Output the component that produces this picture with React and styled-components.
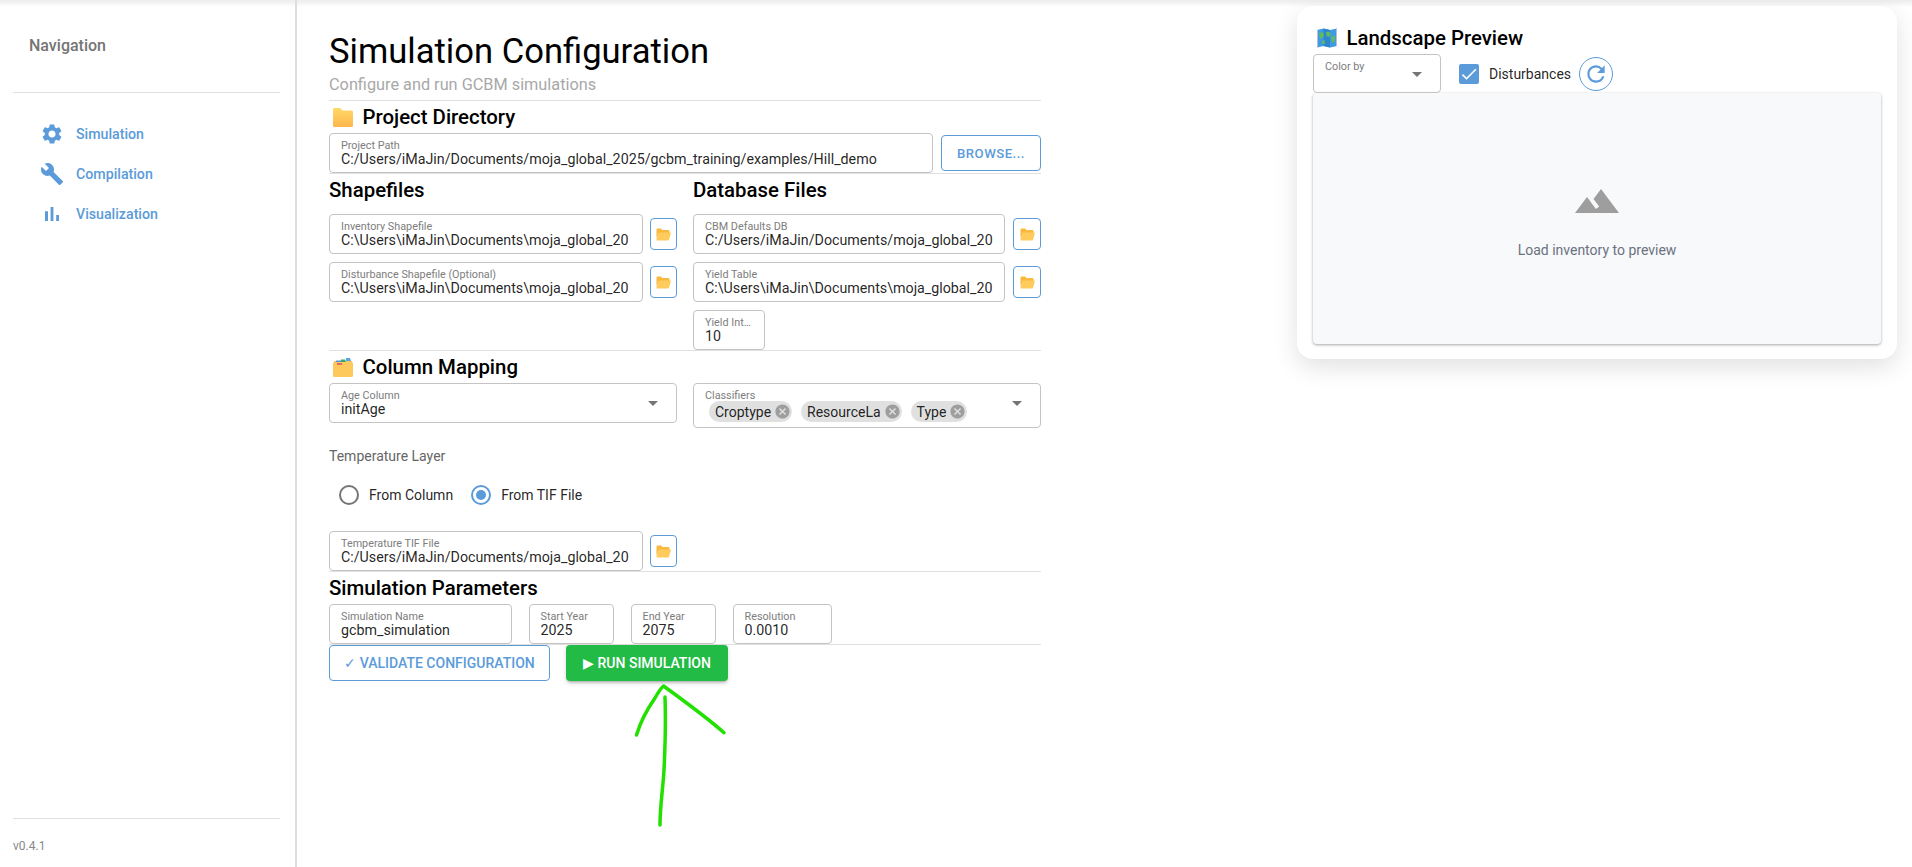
import React from "react";
import styled, { createGlobalStyle } from "styled-components";
import {
  MdSettings,
  MdBuild,
  MdArrowDropDown,
  MdCancel,
  MdCheck,
  MdRefresh,
  MdTerrain,
} from "react-icons/md";

const BLUE = "#5b9bd9";

const GlobalStyle = createGlobalStyle`
  html, body {
    margin: 0;
    padding: 0;
    background: #fff;
    font-family: Roboto, "Liberation Sans", sans-serif;
    color: rgba(0, 0, 0, 0.87);
  }
  * { box-sizing: border-box; }
`;

const Page = styled.div`
  position: relative;
  display: flex;
  height: 867px;
  overflow: hidden;
  &::before {
    content: "";
    position: absolute;
    top: 0;
    left: 0;
    right: 0;
    height: 7px;
    background: linear-gradient(#ececec, #ffffff);
  }
`;

const Sidebar = styled.aside`
  position: relative;
  width: 297px;
  flex: none;
  display: flex;
  flex-direction: column;
  border-right: 2px solid #dedede;
`;

const NavTitle = styled.div`
  height: 92px;
  padding: 36px 0 0 29px;
  font-size: 16px;
  line-height: 20px;
  font-weight: 500;
  color: #757575;
`;

const SideRule = styled.hr`
  margin: 0 15px 0 13px;
  border: 0;
  border-top: 1px solid #e0e0e0;
`;

const NavList = styled.nav`
  padding-top: 21px;
`;

const NavItem = styled.a`
  display: flex;
  align-items: center;
  gap: 12px;
  height: 40px;
  padding-left: 40px;
  font-size: 14.2px;
  font-weight: 500;
  color: ${BLUE};
  svg {
    width: 24px;
    height: 24px;
    flex: none;
  }
`;

const SideFooter = styled.div`
  margin-top: auto;
`;

const Version = styled.div`
  height: 48px;
  padding: 18px 0 0 13px;
  font-size: 12px;
  line-height: 18px;
  color: #888;
`;

const Main = styled.main`
  width: 744px;
  flex: none;
  padding: 30px 0 0 32px;
`;

const Title = styled.h1`
  margin: 0;
  height: 43px;
  font-size: 34.6px;
  line-height: 43px;
  font-weight: 400;
  color: #000;
`;

const Subtitle = styled.p`
  margin: 0 0 3px;
  height: 24px;
  font-size: 16.3px;
  line-height: 24px;
  color: #a8a8a8;
`;

const Rule = styled.hr`
  margin: 0;
  border: 0;
  border-top: 1px solid #e0e0e0;
`;

const Heading = styled.h2`
  margin: 0;
  display: flex;
  align-items: center;
  gap: 9.5px;
  height: 32px;
  margin-bottom: ${(p) => p.$mb || 0}px;
  padding-left: ${(p) => (p.$emoji ? 4 : 0)}px;
  font-size: 20.4px;
  line-height: 24px;
  font-weight: 500;
  color: #000;
`;

const Row = styled.div`
  display: flex;
  align-items: center;
  gap: ${(p) => p.$gap || 8}px;
`;

const Columns = styled.div`
  display: grid;
  grid-template-columns: 1fr 1fr;
  gap: 16px;
  align-items: start;
`;

const Stack = styled.div`
  display: flex;
  flex-direction: column;
  gap: 8px;
`;

const Field = styled.label`
  display: block;
  height: 40px;
  padding: 5px ${(p) => (p.$tight ? 13 : 11)}px 0 11px;
  border: 1px solid #c4c4c4;
  border-radius: 4px;
  background: #fff;
  min-width: 0;
  flex: ${(p) => (p.$w ? "none" : "1")};
  width: ${(p) => (p.$w ? `${p.$w}px` : "auto")};
`;

const FieldLabel = styled.span`
  display: block;
  font-size: 10.8px;
  line-height: 13px;
  color: #7d7d7d;
  white-space: nowrap;
`;

const FieldInput = styled.input`
  display: block;
  width: 100%;
  height: 15px;
  padding: 0;
  border: 0;
  outline: 0;
  background: transparent;
  font-family: inherit;
  font-size: 14.25px;
  line-height: 15px;
  color: rgba(0, 0, 0, 0.87);
`;

const Browse = styled.button`
  width: 100px;
  height: 36px;
  flex: none;
  padding: 0;
  border: 1px solid ${BLUE};
  border-radius: 4px;
  background: #fff;
  font-family: inherit;
  font-size: 13.2px;
  font-weight: 500;
  letter-spacing: 0.45px;
  color: ${BLUE};
`;

const FolderButton = styled.button`
  display: flex;
  align-items: center;
  justify-content: center;
  width: ${(p) => (p.$tight ? 27 : 28)}px;
  height: 32px;
  flex: none;
  padding: 0;
  border: 1px solid ${BLUE};
  border-radius: 4px;
  background: #fff;
`;

const SelectBox = styled.div`
  position: relative;
  height: ${(p) => p.$h || 40}px;
  padding: 5px 11px 0;
  border: 1px solid #c4c4c4;
  border-radius: 4px;
  flex: ${(p) => (p.$w ? "none" : "auto")};
  width: ${(p) => (p.$w ? `${p.$w}px` : "auto")};
`;

const SelectValue = styled.div`
  font-size: 14.25px;
  line-height: 15px;
`;

const Caret = styled(MdArrowDropDown)`
  position: absolute;
  top: 7px;
  right: 11px;
  font-size: 24px;
  color: #757575;
`;

const Chips = styled.div`
  display: flex;
  gap: 9px;
  margin-top: -1px;
  margin-left: 4px;
`;

const Chip = styled.span`
  display: inline-flex;
  align-items: center;
  gap: 3px;
  height: 21px;
  padding: 0 1px 0 6px;
  border-radius: 11px;
  background: #e0e0e0;
  font-size: 14px;
  color: rgba(0, 0, 0, 0.87);
  svg {
    font-size: 17px;
    color: #9e9e9e;
  }
`;

const GroupLabel = styled.div`
  margin-top: 18px;
  font-size: 14px;
  line-height: 20px;
  color: #666;
`;

const RadioRow = styled.div`
  display: flex;
  align-items: center;
  height: 42px;
  margin: 8px 0 15px;
  padding-left: 10px;
`;

const RadioOption = styled.div`
  display: flex;
  align-items: center;
  gap: 10px;
  margin-right: 18px;
  font-size: 14px;
`;

const RadioMark = styled.span`
  display: flex;
  align-items: center;
  justify-content: center;
  width: 20px;
  height: 20px;
  border: 2px solid ${(p) => (p.$on ? BLUE : "#757575")};
  border-radius: 50%;
  &::after {
    content: "";
    width: 10px;
    height: 10px;
    border-radius: 50%;
    background: ${(p) => (p.$on ? BLUE : "transparent")};
  }
`;

const ButtonRow = styled.div`
  display: flex;
  gap: 16px;
`;

const OutlineButton = styled.button`
  width: 221px;
  height: 36px;
  padding: 0;
  border: 1px solid ${BLUE};
  border-radius: 4px;
  background: #fff;
  font-family: inherit;
  font-size: 14px;
  font-weight: 500;
  color: ${BLUE};
`;

const RunButton = styled.button`
  width: 162px;
  height: 36px;
  padding: 0;
  border: 0;
  border-radius: 4px;
  background: #22bb45;
  box-shadow: 0 3px 3px -2px rgba(0, 0, 0, 0.25), 0 2px 4px rgba(0, 0, 0, 0.16);
  font-family: inherit;
  font-size: 14px;
  font-weight: 500;
  color: #fff;
`;

const Panel = styled.section`
  width: 600px;
  height: 353px;
  flex: none;
  margin: 6px 15px 0 auto;
  padding: 16px;
  border-radius: 16px;
  background: #fff;
  box-shadow: 0 8px 24px rgba(0, 0, 0, 0.12);
  position: relative;
`;

const Controls = styled.div`
  display: flex;
  align-items: center;
  height: 39px;
`;

const Check = styled.span`
  display: flex;
  align-items: center;
  justify-content: center;
  width: 20px;
  height: 20px;
  margin: 0 10px 0 18px;
  border-radius: 2px;
  background: ${BLUE};
  color: #fff;
  font-size: 22px;
`;

const CheckText = styled.span`
  font-size: 14px;
`;

const RoundButton = styled.button`
  display: flex;
  align-items: center;
  justify-content: center;
  width: 34px;
  height: 34px;
  margin-left: 8px;
  padding: 0;
  border: 1px solid ${BLUE};
  border-radius: 50%;
  background: #fff;
  color: ${BLUE};
  font-size: 26px;
`;

const Preview = styled.div`
  display: flex;
  flex-direction: column;
  align-items: center;
  justify-content: center;
  height: 251px;
  border-radius: 4px;
  background: #f8f9fb;
  box-shadow: 0 1px 3px rgba(0, 0, 0, 0.35);
  svg {
    font-size: 48px;
    color: #9e9e9e;
  }
`;

const PreviewText = styled.div`
  margin-top: 15px;
  font-size: 14px;
  line-height: 20px;
  color: #6b7280;
`;

const Scribble = styled.svg`
  position: absolute;
  left: 630px;
  top: 680px;
  pointer-events: none;
`;

function BarChartIcon() {
  return (
    <svg viewBox="0 0 24 24" fill="currentColor">
      <path d="M5 9.2h3V19H5zM10.6 5h2.8v14h-2.8zm5.6 8H19v6h-2.8z" />
    </svg>
  );
}

function ClosedFolder() {
  return (
    <svg width="20" height="20" viewBox="0 0 20 20">
      <defs>
        <linearGradient id="fold" x1="0" y1="0" x2="0" y2="1">
          <stop offset="0" stopColor="#ffd966" />
          <stop offset="1" stopColor="#fdb64e" />
        </linearGradient>
      </defs>
      <path d="M0 2.5Q0 1 1.5 1H7L9.5 3.5H18.5Q20 3.5 20 5V18.5Q20 20 18.5 20H1.5Q0 20 0 18.5Z" fill="url(#fold)" />
    </svg>
  );
}

function IndexFolder() {
  return (
    <svg width="20" height="20" viewBox="0 0 20 20">
      <path d="M1 4H19V8H1Z" fill="#e9c46a" />
      <path d="M8 2.5H12L13 5H8Z" fill="#3aa76d" />
      <path d="M13 1H17L18 4H13Z" fill="#5aa7e0" />
      <path d="M3 3.5H8V6H3Z" fill="#5b8fd9" />
      <path d="M0 6.5Q0 5 1.5 5H18.5Q20 5 20 6.5V18.5Q20 20 18.5 20H1.5Q0 20 0 18.5Z" fill="#fdc85c" />
      <path d="M4 6H9V8H4Z" fill="#e36a5c" />
    </svg>
  );
}

function OpenFolder() {
  return (
    <svg width="15" height="13" viewBox="0 0 15 13">
      <path d="M0.5 1.5Q0.5 0.5 1.5 0.5H5L6.5 2H12.5Q13.5 2 13.5 3V5H3L0.5 11Z" fill="#f9b93f" />
      <path d="M3 4.5H14.2Q15 4.5 14.8 5.4L13 11.8Q12.7 12.5 12 12.5H1Q0.2 12.5 0.5 11.6Z" fill="#ffcb5c" />
    </svg>
  );
}

function MapEmoji() {
  return (
    <svg width="20" height="20" viewBox="0 0 20 20">
      <path d="M0 2L6.5 0.5 13 2 20 0.5V18L13 19.5 6.5 18 0 19.5Z" fill="#3f9be0" />
      <path d="M6.5 0.5V18L13 19.5V2Z" fill="#2f86cf" />
      <path d="M2 5L6 4 7 8 4 11 2.5 9ZM9 4L12 3.5 14 6 12 9 9.5 8ZM14 9L18 7.5 18 13 15 15ZM5 13L7.5 12 8 16 5.5 16Z" fill="#5dbb63" />
      <path d="M0 2V19.5L0.8 19.3V1.8ZM19.2 0.7V18.2L20 18V0.5Z" fill="#d9c3e8" />
    </svg>
  );
}

function PathField({ label, value, w, tight }) {
  return (
    <Field $w={w} $tight={tight}>
      <FieldLabel>{label}</FieldLabel>
      <FieldInput readOnly value={value} />
    </Field>
  );
}

function FileRow({ label, value, tight }) {
  return (
    <Row $gap={tight ? 7 : 8}>
      <PathField label={label} value={value} tight={tight} />
      <FolderButton $tight={tight}>
        <OpenFolder />
      </FolderButton>
    </Row>
  );
}

export default function App() {
  return (
    <Page>
      <GlobalStyle />
      <Sidebar>
        <NavTitle>Navigation</NavTitle>
        <SideRule />
        <NavList>
          <NavItem>
            <MdSettings />
            Simulation
          </NavItem>
          <NavItem>
            <MdBuild />
            Compilation
          </NavItem>
          <NavItem>
            <BarChartIcon />
            Visualization
          </NavItem>
        </NavList>
        <SideFooter>
          <SideRule />
          <Version>v0.4.1</Version>
        </SideFooter>
      </Sidebar>

      <Main>
        <Title>Simulation Configuration</Title>
        <Subtitle>Configure and run GCBM simulations</Subtitle>
        <Rule />

        <Heading $emoji>
          <ClosedFolder />
          Project Directory
        </Heading>
        <Row>
          <PathField
            label="Project Path"
            value="C:/Users/iMaJin/Documents/moja_global_2025/gcbm_training/examples/Hill_demo"
          />
          <Browse>BROWSE...</Browse>
        </Row>
        <Rule />

        <Columns>
          <div>
            <Heading $mb={8}>Shapefiles</Heading>
            <Stack>
              <FileRow
                tight
                label="Inventory Shapefile"
                value="C:\Users\iMaJin\Documents\moja_global_2025"
              />
              <FileRow
                tight
                label="Disturbance Shapefile (Optional)"
                value="C:\Users\iMaJin\Documents\moja_global_2025"
              />
            </Stack>
          </div>
          <div>
            <Heading $mb={8}>Database Files</Heading>
            <Stack>
              <FileRow
                label="CBM Defaults DB"
                value="C:/Users/iMaJin/Documents/moja_global_2025"
              />
              <FileRow
                label="Yield Table"
                value="C:\Users\iMaJin\Documents\moja_global_2025"
              />
              <PathField label="Yield Int…" value="10" w={72} />
            </Stack>
          </div>
        </Columns>
        <Rule />

        <Heading $emoji>
          <IndexFolder />
          Column Mapping
        </Heading>
        <Columns>
          <SelectBox>
            <FieldLabel>Age Column</FieldLabel>
            <SelectValue>initAge</SelectValue>
            <Caret />
          </SelectBox>
          <SelectBox $h={45}>
            <FieldLabel>Classifiers</FieldLabel>
            <Chips>
              <Chip>
                Croptype
                <MdCancel />
              </Chip>
              <Chip>
                ResourceLa
                <MdCancel />
              </Chip>
              <Chip>
                Type
                <MdCancel />
              </Chip>
            </Chips>
            <Caret />
          </SelectBox>
        </Columns>

        <GroupLabel>Temperature Layer</GroupLabel>
        <RadioRow>
          <RadioOption>
            <RadioMark />
            From Column
          </RadioOption>
          <RadioOption>
            <RadioMark $on />
            From TIF File
          </RadioOption>
        </RadioRow>
        <Columns>
          <FileRow
            tight
            label="Temperature TIF File"
            value="C:/Users/iMaJin/Documents/moja_global_2025"
          />
        </Columns>
        <Rule />

        <Heading>Simulation Parameters</Heading>
        <Row $gap={16.5}>
          <PathField label="Simulation Name" value="gcbm_simulation" w={183} />
          <PathField label="Start Year" value="2025" w={85.5} />
          <PathField label="End Year" value="2075" w={85.5} />
          <PathField label="Resolution" value="0.0010" w={99} />
        </Row>
        <Rule />
        <ButtonRow>
          <OutlineButton>✓ VALIDATE CONFIGURATION</OutlineButton>
          <RunButton>▶ RUN SIMULATION</RunButton>
        </ButtonRow>
      </Main>

      <Panel>
        <Heading $emoji>
          <MapEmoji />
          Landscape Preview
        </Heading>
        <Controls>
          <SelectBox $w={128} $h={39}>
            <FieldLabel>Color by</FieldLabel>
            <Caret />
          </SelectBox>
          <Check>
            <MdCheck />
          </Check>
          <CheckText>Disturbances</CheckText>
          <RoundButton>
            <MdRefresh />
          </RoundButton>
        </Controls>
        <Preview>
          <MdTerrain />
          <PreviewText>Load inventory to preview</PreviewText>
        </Preview>
      </Panel>

      <Scribble width="100" height="150" viewBox="0 0 100 150" fill="none" stroke="#22e000" strokeWidth="3.5" strokeLinecap="round" strokeLinejoin="round">
        <path d="M6.5 55C11 40 18 28 25 18C29 11 31 8 33.5 6C50 18 75 36 94 52.7" />
        <path d="M35 17C36 45 35 70 34 90C33 108 30 126 30 145" />
      </Scribble>
    </Page>
  );
}
